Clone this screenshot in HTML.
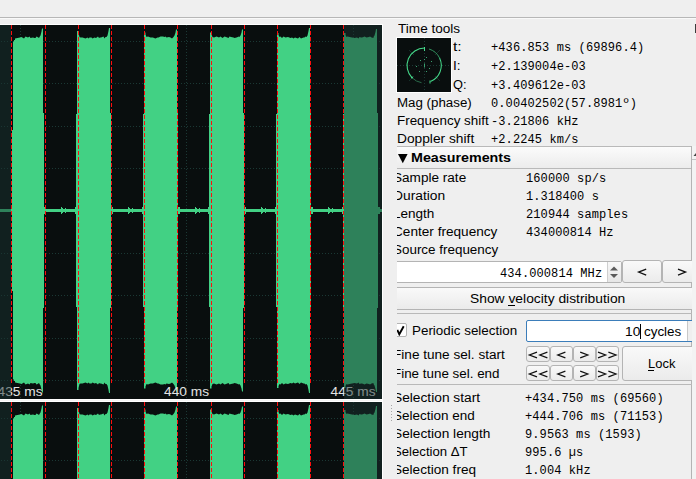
<!DOCTYPE html>
<html><head><meta charset="utf-8"><style>
*{margin:0;padding:0;box-sizing:border-box}
html,body{width:696px;height:479px;overflow:hidden;background:#efefef}
body{position:relative}
.t{position:absolute;white-space:pre;line-height:14px;transform-origin:0 0}
.s{font-family:"Liberation Sans",sans-serif}
.m{font-family:"Liberation Mono",monospace;letter-spacing:0.1px}
.abs{position:absolute}
.btn{position:absolute;border:1px solid #b4b4b4;border-radius:3px;background:linear-gradient(#f9f9f9,#ebebeb)}
</style></head>
<body>
<svg width="383" height="479" style="position:absolute;left:0;top:0">
<defs>
<clipPath id="c1"><rect x="0" y="25" width="382" height="374"/></clipPath>
<clipPath id="c2"><rect x="0" y="25" width="382" height="77"/></clipPath>
</defs>
<rect x="0" y="24" width="383" height="455" fill="#ffffff"/>
<rect x="0" y="400" width="382" height="1" fill="#f4f4f4"/>
<rect x="0" y="398" width="382" height="1" fill="#000"/>
<rect x="0" y="402" width="382" height="1" fill="#000"/>
<g transform="translate(0,0)" clip-path="url(#c1)">
<rect x="0" y="25" width="382" height="374" fill="#090e0e"/>
<g shape-rendering="crispEdges">
<path d="M1,41.5H382" stroke="#1b3834" stroke-dasharray="1 2"/>
<path d="M1,83.5H382" stroke="#1b3834" stroke-dasharray="1 2"/>
<path d="M1,126.5H382" stroke="#1b3834" stroke-dasharray="1 2"/>
<path d="M1,168.5H382" stroke="#1b3834" stroke-dasharray="1 2"/>
<path d="M1,210.5H382" stroke="#1b3834" stroke-dasharray="1 2"/>
<path d="M1,253.5H382" stroke="#1b3834" stroke-dasharray="1 2"/>
<path d="M1,295.5H382" stroke="#1b3834" stroke-dasharray="1 2"/>
<path d="M1,338.5H382" stroke="#1b3834" stroke-dasharray="1 2"/>
<path d="M1,380.5H382" stroke="#1b3834" stroke-dasharray="1 2"/>
<path d="M20.5,25V399" stroke="#1b3834" stroke-dasharray="1 2"/>
<path d="M186.5,25V399" stroke="#1b3834" stroke-dasharray="1 2"/>
<path d="M353.5,25V399" stroke="#1b3834" stroke-dasharray="1 2"/>
<rect x="0" y="209" width="382" height="3" fill="#42d184"/>
<rect x="12" y="204" width="1" height="13" fill="#42d184"/>
<rect x="11" y="207" width="1" height="7" fill="#42d184"/>
<rect x="43" y="203" width="1" height="16" fill="#42d184"/>
<rect x="44" y="207" width="2" height="7" fill="#42d184"/>
<path d="M61,207 L63,209 L63,212 L61,214Z M64,209 L66,207 L66,214 L64,212Z" fill="#42d184"/>
<rect x="76" y="204" width="1" height="13" fill="#42d184"/>
<rect x="75" y="207" width="1" height="7" fill="#42d184"/>
<rect x="110" y="203" width="1" height="16" fill="#42d184"/>
<rect x="111" y="207" width="2" height="7" fill="#42d184"/>
<path d="M128,207 L130,209 L130,212 L128,214Z M131,209 L133,207 L133,214 L131,212Z" fill="#42d184"/>
<rect x="143" y="204" width="1" height="13" fill="#42d184"/>
<rect x="142" y="207" width="1" height="7" fill="#42d184"/>
<rect x="177" y="203" width="1" height="16" fill="#42d184"/>
<rect x="178" y="207" width="2" height="7" fill="#42d184"/>
<path d="M195,207 L197,209 L197,212 L195,214Z M198,209 L200,207 L200,214 L198,212Z" fill="#42d184"/>
<rect x="209" y="204" width="1" height="13" fill="#42d184"/>
<rect x="208" y="207" width="1" height="7" fill="#42d184"/>
<rect x="243" y="203" width="1" height="16" fill="#42d184"/>
<rect x="244" y="207" width="2" height="7" fill="#42d184"/>
<path d="M261,207 L263,209 L263,212 L261,214Z M264,209 L266,207 L266,214 L264,212Z" fill="#42d184"/>
<rect x="276" y="204" width="1" height="13" fill="#42d184"/>
<rect x="275" y="207" width="1" height="7" fill="#42d184"/>
<rect x="310" y="203" width="1" height="16" fill="#42d184"/>
<rect x="311" y="207" width="2" height="7" fill="#42d184"/>
<path d="M328,207 L330,209 L330,212 L328,214Z M331,209 L333,207 L333,214 L331,212Z" fill="#42d184"/>
<rect x="343" y="204" width="1" height="13" fill="#42d184"/>
<rect x="342" y="207" width="1" height="7" fill="#42d184"/>
<rect x="377" y="203" width="1" height="16" fill="#42d184"/>
<rect x="378" y="207" width="2" height="7" fill="#42d184"/>
</g>
<path d="M13,41.5 L14,41.5 L14,40 L15,40 L15,38.5 L17.5,38 L20,37.5 L21.5,37 L24,38.5 L25.5,36.5 L28,37.5 L29.5,36.5 L30.5,38 L33,37.5 L34.5,38 L35.5,38 L36.5,36.5 L37.5,37 L39,38 L39.5,37 L40.5,35.5 L41.5,31.5 L42,28.5 L43,28.5 L43,392.5 L42,392.5 L41.5,389.5 L40.5,385.5 L39.5,384 L39,383 L37.5,384 L36.5,384.5 L35.5,383 L34.5,383 L33,383.5 L30.5,383 L29.5,384.5 L28,383.5 L25.5,384.5 L24,382.5 L21.5,384 L20,383.5 L17.5,383 L15,382.5 L15,381 L14,381 L14,379.5 L13,379.5Z" fill="#42d184"/>
<path d="M77,31 L78.5,31 L78.5,33 L79.5,37 L80.5,37.5 L82.5,37.5 L84,38 L85.5,38.5 L87.5,37.5 L88.5,38.5 L89.5,37.5 L91.5,37.5 L92.5,38.5 L94.5,37.5 L96,38 L98,36.5 L99,38 L100,37.5 L101,37.5 L103.5,36.5 L104.5,38.5 L105.5,37 L106.5,37 L107.5,35.5 L108.5,31 L109,28 L110,28 L110,393 L109,393 L108.5,390 L107.5,385.5 L106.5,384 L105.5,384 L104.5,382.5 L103.5,384.5 L101,383.5 L100,383.5 L99,383 L98,384.5 L96,383 L94.5,383.5 L92.5,382.5 L91.5,383.5 L89.5,383.5 L88.5,382.5 L87.5,383.5 L85.5,382.5 L84,383 L82.5,383.5 L80.5,383.5 L79.5,384 L78.5,388 L78.5,390 L77,390Z" fill="#42d184"/>
<path d="M144,32.5 L145.5,32.5 L145.5,34.5 L146.5,37 L148,36.5 L150.5,37.5 L153,37.5 L154,38 L155.5,38.5 L157.5,37.5 L158.5,37.5 L160.5,36.5 L163,36.5 L164.5,37 L165.5,36.5 L166.5,37.5 L169,37 L170.5,37.5 L172,38.5 L173.5,37 L174.5,35.5 L175.5,32.5 L176,29.5 L177,29.5 L177,391.5 L176,391.5 L175.5,388.5 L174.5,385.5 L173.5,384 L172,382.5 L170.5,383.5 L169,384 L166.5,383.5 L165.5,384.5 L164.5,384 L163,384.5 L160.5,384.5 L158.5,383.5 L157.5,383.5 L155.5,382.5 L154,383 L153,383.5 L150.5,383.5 L148,384.5 L146.5,384 L145.5,386.5 L145.5,388.5 L144,388.5Z" fill="#42d184"/>
<path d="M210,32.5 L211.5,32.5 L211.5,34.5 L212.5,37 L214,37.5 L216.5,36.5 L219,37.5 L220.5,36.5 L222.5,38 L224.5,36.5 L226,37 L228.5,38 L229.5,36.5 L231,37 L233.5,37.5 L234.5,38 L236.5,37.5 L239,36.5 L239.5,37 L240.5,35.5 L241.5,32.5 L242,29.5 L243,29.5 L243,391.5 L242,391.5 L241.5,388.5 L240.5,385.5 L239.5,384 L239,384.5 L236.5,383.5 L234.5,383 L233.5,383.5 L231,384 L229.5,384.5 L228.5,383 L226,384 L224.5,384.5 L222.5,383 L220.5,384.5 L219,383.5 L216.5,384.5 L214,383.5 L212.5,384 L211.5,386.5 L211.5,388.5 L210,388.5Z" fill="#42d184"/>
<path d="M277,33 L278.5,33 L278.5,35 L279.5,37 L280.5,36.5 L282,38 L283.5,36.5 L285.5,37.5 L288,37 L290.5,38 L292,37.5 L293.5,38.5 L295,37.5 L296.5,38 L298,38.5 L299.5,37 L301,38.5 L303.5,37.5 L304.5,37.5 L305.5,36.5 L306.5,37 L307.5,35.5 L308.5,31 L309,28 L310,28 L310,393 L309,393 L308.5,390 L307.5,385.5 L306.5,384 L305.5,384.5 L304.5,383.5 L303.5,383.5 L301,382.5 L299.5,384 L298,382.5 L296.5,383 L295,383.5 L293.5,382.5 L292,383.5 L290.5,383 L288,384 L285.5,383.5 L283.5,384.5 L282,383 L280.5,384.5 L279.5,384 L278.5,386 L278.5,388 L277,388Z" fill="#42d184"/>
<path d="M344,33 L345.5,33 L345.5,35 L346.5,37 L347.5,36.5 L349.5,37 L352,37.5 L354.5,38 L357,37.5 L358.5,38.5 L359.5,37 L361,37.5 L362,37.5 L363.5,37 L364.5,36.5 L366.5,37.5 L369,37 L370,36.5 L371.5,37.5 L373.5,38 L373.5,37 L374.5,35.5 L375.5,32 L376,29 L377,29 L377,392 L376,392 L375.5,389 L374.5,385.5 L373.5,384 L373.5,383 L371.5,383.5 L370,384.5 L369,384 L366.5,383.5 L364.5,384.5 L363.5,384 L362,383.5 L361,383.5 L359.5,384 L358.5,382.5 L357,383.5 L354.5,383 L352,383.5 L349.5,384 L347.5,384.5 L346.5,384 L345.5,386 L345.5,388 L344,388Z" fill="#42d184"/>
<rect x="12" y="130" width="1" height="161" fill="#42d184" shape-rendering="crispEdges"/>
<rect x="43" y="113" width="1" height="195" fill="#42d184" shape-rendering="crispEdges"/>
<rect x="76" y="114" width="1" height="193" fill="#42d184" shape-rendering="crispEdges"/>
<rect x="110" y="113" width="1" height="195" fill="#42d184" shape-rendering="crispEdges"/>
<rect x="143" y="114" width="1" height="193" fill="#42d184" shape-rendering="crispEdges"/>
<rect x="177" y="113" width="1" height="195" fill="#42d184" shape-rendering="crispEdges"/>
<rect x="209" y="114" width="1" height="193" fill="#42d184" shape-rendering="crispEdges"/>
<rect x="243" y="113" width="1" height="195" fill="#42d184" shape-rendering="crispEdges"/>
<rect x="276" y="114" width="1" height="193" fill="#42d184" shape-rendering="crispEdges"/>
<rect x="310" y="113" width="1" height="195" fill="#42d184" shape-rendering="crispEdges"/>
<rect x="343" y="114" width="1" height="193" fill="#42d184" shape-rendering="crispEdges"/>
<rect x="377" y="113" width="1" height="195" fill="#42d184" shape-rendering="crispEdges"/>
<g shape-rendering="crispEdges">
<path d="M11.5,25V383" stroke="#ff0d0d" stroke-dasharray="4 2"/>
<path d="M45.5,25V383" stroke="#ff0d0d" stroke-dasharray="4 2"/>
<path d="M78.5,25V383" stroke="#ff0d0d" stroke-dasharray="4 2"/>
<path d="M111.5,25V383" stroke="#ff0d0d" stroke-dasharray="4 2"/>
<path d="M144.5,25V383" stroke="#ff0d0d" stroke-dasharray="4 2"/>
<path d="M177.5,25V383" stroke="#ff0d0d" stroke-dasharray="4 2"/>
<path d="M211.5,25V383" stroke="#ff0d0d" stroke-dasharray="4 2"/>
<path d="M244.5,25V383" stroke="#ff0d0d" stroke-dasharray="4 2"/>
<path d="M277.5,25V383" stroke="#ff0d0d" stroke-dasharray="4 2"/>
<path d="M310.5,25V383" stroke="#ff0d0d" stroke-dasharray="4 2"/>
<path d="M343.5,25V383" stroke="#ff0d0d" stroke-dasharray="4 2"/>
</g>
<text x="20" y="396" fill="#e4e4e4" font-family="Liberation Sans" font-size="12.5" text-anchor="middle" textLength="45" lengthAdjust="spacingAndGlyphs">435 ms</text>
<text x="186.5" y="396" fill="#e4e4e4" font-family="Liberation Sans" font-size="12.5" text-anchor="middle" textLength="45" lengthAdjust="spacingAndGlyphs">440 ms</text>
<text x="353" y="396" fill="#e4e4e4" font-family="Liberation Sans" font-size="12.5" text-anchor="middle" textLength="45" lengthAdjust="spacingAndGlyphs">445 ms</text>
<rect x="0" y="25" width="11" height="374" fill="rgba(26,50,48,0.5)"/>
<rect x="344" y="25" width="38" height="374" fill="rgba(26,50,48,0.5)"/>
</g>
<g transform="translate(0,377)" clip-path="url(#c2)">
<rect x="0" y="25" width="382" height="374" fill="#090e0e"/>
<g shape-rendering="crispEdges">
<path d="M1,41.5H382" stroke="#1b3834" stroke-dasharray="1 2"/>
<path d="M1,83.5H382" stroke="#1b3834" stroke-dasharray="1 2"/>
<path d="M1,126.5H382" stroke="#1b3834" stroke-dasharray="1 2"/>
<path d="M1,168.5H382" stroke="#1b3834" stroke-dasharray="1 2"/>
<path d="M1,210.5H382" stroke="#1b3834" stroke-dasharray="1 2"/>
<path d="M1,253.5H382" stroke="#1b3834" stroke-dasharray="1 2"/>
<path d="M1,295.5H382" stroke="#1b3834" stroke-dasharray="1 2"/>
<path d="M1,338.5H382" stroke="#1b3834" stroke-dasharray="1 2"/>
<path d="M1,380.5H382" stroke="#1b3834" stroke-dasharray="1 2"/>
<path d="M20.5,25V399" stroke="#1b3834" stroke-dasharray="1 2"/>
<path d="M186.5,25V399" stroke="#1b3834" stroke-dasharray="1 2"/>
<path d="M353.5,25V399" stroke="#1b3834" stroke-dasharray="1 2"/>
<rect x="0" y="209" width="382" height="3" fill="#42d184"/>
<rect x="12" y="204" width="1" height="13" fill="#42d184"/>
<rect x="11" y="207" width="1" height="7" fill="#42d184"/>
<rect x="43" y="203" width="1" height="16" fill="#42d184"/>
<rect x="44" y="207" width="2" height="7" fill="#42d184"/>
<path d="M61,207 L63,209 L63,212 L61,214Z M64,209 L66,207 L66,214 L64,212Z" fill="#42d184"/>
<rect x="76" y="204" width="1" height="13" fill="#42d184"/>
<rect x="75" y="207" width="1" height="7" fill="#42d184"/>
<rect x="110" y="203" width="1" height="16" fill="#42d184"/>
<rect x="111" y="207" width="2" height="7" fill="#42d184"/>
<path d="M128,207 L130,209 L130,212 L128,214Z M131,209 L133,207 L133,214 L131,212Z" fill="#42d184"/>
<rect x="143" y="204" width="1" height="13" fill="#42d184"/>
<rect x="142" y="207" width="1" height="7" fill="#42d184"/>
<rect x="177" y="203" width="1" height="16" fill="#42d184"/>
<rect x="178" y="207" width="2" height="7" fill="#42d184"/>
<path d="M195,207 L197,209 L197,212 L195,214Z M198,209 L200,207 L200,214 L198,212Z" fill="#42d184"/>
<rect x="209" y="204" width="1" height="13" fill="#42d184"/>
<rect x="208" y="207" width="1" height="7" fill="#42d184"/>
<rect x="243" y="203" width="1" height="16" fill="#42d184"/>
<rect x="244" y="207" width="2" height="7" fill="#42d184"/>
<path d="M261,207 L263,209 L263,212 L261,214Z M264,209 L266,207 L266,214 L264,212Z" fill="#42d184"/>
<rect x="276" y="204" width="1" height="13" fill="#42d184"/>
<rect x="275" y="207" width="1" height="7" fill="#42d184"/>
<rect x="310" y="203" width="1" height="16" fill="#42d184"/>
<rect x="311" y="207" width="2" height="7" fill="#42d184"/>
<path d="M328,207 L330,209 L330,212 L328,214Z M331,209 L333,207 L333,214 L331,212Z" fill="#42d184"/>
<rect x="343" y="204" width="1" height="13" fill="#42d184"/>
<rect x="342" y="207" width="1" height="7" fill="#42d184"/>
<rect x="377" y="203" width="1" height="16" fill="#42d184"/>
<rect x="378" y="207" width="2" height="7" fill="#42d184"/>
</g>
<path d="M13,41.5 L14,41.5 L14,40 L15,40 L15,38.5 L17.5,38 L20,37.5 L21.5,37 L24,38.5 L25.5,36.5 L28,37.5 L29.5,36.5 L30.5,38 L33,37.5 L34.5,38 L35.5,38 L36.5,36.5 L37.5,37 L39,38 L39.5,37 L40.5,35.5 L41.5,31.5 L42,28.5 L43,28.5 L43,392.5 L42,392.5 L41.5,389.5 L40.5,385.5 L39.5,384 L39,383 L37.5,384 L36.5,384.5 L35.5,383 L34.5,383 L33,383.5 L30.5,383 L29.5,384.5 L28,383.5 L25.5,384.5 L24,382.5 L21.5,384 L20,383.5 L17.5,383 L15,382.5 L15,381 L14,381 L14,379.5 L13,379.5Z" fill="#42d184"/>
<path d="M77,31 L78.5,31 L78.5,33 L79.5,37 L80.5,37.5 L82.5,37.5 L84,38 L85.5,38.5 L87.5,37.5 L88.5,38.5 L89.5,37.5 L91.5,37.5 L92.5,38.5 L94.5,37.5 L96,38 L98,36.5 L99,38 L100,37.5 L101,37.5 L103.5,36.5 L104.5,38.5 L105.5,37 L106.5,37 L107.5,35.5 L108.5,31 L109,28 L110,28 L110,393 L109,393 L108.5,390 L107.5,385.5 L106.5,384 L105.5,384 L104.5,382.5 L103.5,384.5 L101,383.5 L100,383.5 L99,383 L98,384.5 L96,383 L94.5,383.5 L92.5,382.5 L91.5,383.5 L89.5,383.5 L88.5,382.5 L87.5,383.5 L85.5,382.5 L84,383 L82.5,383.5 L80.5,383.5 L79.5,384 L78.5,388 L78.5,390 L77,390Z" fill="#42d184"/>
<path d="M144,32.5 L145.5,32.5 L145.5,34.5 L146.5,37 L148,36.5 L150.5,37.5 L153,37.5 L154,38 L155.5,38.5 L157.5,37.5 L158.5,37.5 L160.5,36.5 L163,36.5 L164.5,37 L165.5,36.5 L166.5,37.5 L169,37 L170.5,37.5 L172,38.5 L173.5,37 L174.5,35.5 L175.5,32.5 L176,29.5 L177,29.5 L177,391.5 L176,391.5 L175.5,388.5 L174.5,385.5 L173.5,384 L172,382.5 L170.5,383.5 L169,384 L166.5,383.5 L165.5,384.5 L164.5,384 L163,384.5 L160.5,384.5 L158.5,383.5 L157.5,383.5 L155.5,382.5 L154,383 L153,383.5 L150.5,383.5 L148,384.5 L146.5,384 L145.5,386.5 L145.5,388.5 L144,388.5Z" fill="#42d184"/>
<path d="M210,32.5 L211.5,32.5 L211.5,34.5 L212.5,37 L214,37.5 L216.5,36.5 L219,37.5 L220.5,36.5 L222.5,38 L224.5,36.5 L226,37 L228.5,38 L229.5,36.5 L231,37 L233.5,37.5 L234.5,38 L236.5,37.5 L239,36.5 L239.5,37 L240.5,35.5 L241.5,32.5 L242,29.5 L243,29.5 L243,391.5 L242,391.5 L241.5,388.5 L240.5,385.5 L239.5,384 L239,384.5 L236.5,383.5 L234.5,383 L233.5,383.5 L231,384 L229.5,384.5 L228.5,383 L226,384 L224.5,384.5 L222.5,383 L220.5,384.5 L219,383.5 L216.5,384.5 L214,383.5 L212.5,384 L211.5,386.5 L211.5,388.5 L210,388.5Z" fill="#42d184"/>
<path d="M277,33 L278.5,33 L278.5,35 L279.5,37 L280.5,36.5 L282,38 L283.5,36.5 L285.5,37.5 L288,37 L290.5,38 L292,37.5 L293.5,38.5 L295,37.5 L296.5,38 L298,38.5 L299.5,37 L301,38.5 L303.5,37.5 L304.5,37.5 L305.5,36.5 L306.5,37 L307.5,35.5 L308.5,31 L309,28 L310,28 L310,393 L309,393 L308.5,390 L307.5,385.5 L306.5,384 L305.5,384.5 L304.5,383.5 L303.5,383.5 L301,382.5 L299.5,384 L298,382.5 L296.5,383 L295,383.5 L293.5,382.5 L292,383.5 L290.5,383 L288,384 L285.5,383.5 L283.5,384.5 L282,383 L280.5,384.5 L279.5,384 L278.5,386 L278.5,388 L277,388Z" fill="#42d184"/>
<path d="M344,33 L345.5,33 L345.5,35 L346.5,37 L347.5,36.5 L349.5,37 L352,37.5 L354.5,38 L357,37.5 L358.5,38.5 L359.5,37 L361,37.5 L362,37.5 L363.5,37 L364.5,36.5 L366.5,37.5 L369,37 L370,36.5 L371.5,37.5 L373.5,38 L373.5,37 L374.5,35.5 L375.5,32 L376,29 L377,29 L377,392 L376,392 L375.5,389 L374.5,385.5 L373.5,384 L373.5,383 L371.5,383.5 L370,384.5 L369,384 L366.5,383.5 L364.5,384.5 L363.5,384 L362,383.5 L361,383.5 L359.5,384 L358.5,382.5 L357,383.5 L354.5,383 L352,383.5 L349.5,384 L347.5,384.5 L346.5,384 L345.5,386 L345.5,388 L344,388Z" fill="#42d184"/>
<rect x="12" y="130" width="1" height="161" fill="#42d184" shape-rendering="crispEdges"/>
<rect x="43" y="113" width="1" height="195" fill="#42d184" shape-rendering="crispEdges"/>
<rect x="76" y="114" width="1" height="193" fill="#42d184" shape-rendering="crispEdges"/>
<rect x="110" y="113" width="1" height="195" fill="#42d184" shape-rendering="crispEdges"/>
<rect x="143" y="114" width="1" height="193" fill="#42d184" shape-rendering="crispEdges"/>
<rect x="177" y="113" width="1" height="195" fill="#42d184" shape-rendering="crispEdges"/>
<rect x="209" y="114" width="1" height="193" fill="#42d184" shape-rendering="crispEdges"/>
<rect x="243" y="113" width="1" height="195" fill="#42d184" shape-rendering="crispEdges"/>
<rect x="276" y="114" width="1" height="193" fill="#42d184" shape-rendering="crispEdges"/>
<rect x="310" y="113" width="1" height="195" fill="#42d184" shape-rendering="crispEdges"/>
<rect x="343" y="114" width="1" height="193" fill="#42d184" shape-rendering="crispEdges"/>
<rect x="377" y="113" width="1" height="195" fill="#42d184" shape-rendering="crispEdges"/>
<g shape-rendering="crispEdges">
<path d="M11.5,25V383" stroke="#ff0d0d" stroke-dasharray="4 2"/>
<path d="M45.5,25V383" stroke="#ff0d0d" stroke-dasharray="4 2"/>
<path d="M78.5,25V383" stroke="#ff0d0d" stroke-dasharray="4 2"/>
<path d="M111.5,25V383" stroke="#ff0d0d" stroke-dasharray="4 2"/>
<path d="M144.5,25V383" stroke="#ff0d0d" stroke-dasharray="4 2"/>
<path d="M177.5,25V383" stroke="#ff0d0d" stroke-dasharray="4 2"/>
<path d="M211.5,25V383" stroke="#ff0d0d" stroke-dasharray="4 2"/>
<path d="M244.5,25V383" stroke="#ff0d0d" stroke-dasharray="4 2"/>
<path d="M277.5,25V383" stroke="#ff0d0d" stroke-dasharray="4 2"/>
<path d="M310.5,25V383" stroke="#ff0d0d" stroke-dasharray="4 2"/>
<path d="M343.5,25V383" stroke="#ff0d0d" stroke-dasharray="4 2"/>
</g>
<rect x="0" y="25" width="11" height="374" fill="rgba(26,50,48,0.5)"/>
<rect x="344" y="25" width="38" height="374" fill="rgba(26,50,48,0.5)"/>
</g>
</svg>

<div class="abs" style="left:0;top:17px;width:696px;height:1px;background:#b7b7b7"></div>
<div class="abs" style="left:0;top:18px;width:696px;height:1px;background:#f9f9f9"></div>
<div class="abs" style="left:695px;top:24px;width:2px;height:9px;background:#3c3c3c"></div>
<div class="abs" style="left:692px;top:146px;width:4px;height:333px;background:#f3f3f3"></div>
<div class="abs" style="left:692px;top:159px;width:4px;height:1px;background:#c4c4c4"></div>
<svg class="abs" style="left:692px;top:150px" width="4" height="8"><path d="M1.5,6 L4.5,2.5 L7.5,6Z" fill="#444"/></svg>
<svg class="abs" style="left:390px;top:404px" width="3" height="18"><g fill="#a5a5a5"><rect x="1" y="1" width="1" height="1"/><rect x="1" y="4" width="1" height="1"/><rect x="1" y="7" width="1" height="1"/><rect x="1" y="10" width="1" height="1"/><rect x="1" y="13" width="1" height="1"/><rect x="1" y="16" width="1" height="1"/></g></svg>
<svg class="abs" style="left:396px;top:37px" width="56" height="56">
<rect width="56" height="56" fill="#fff"/>
<rect x="1" y="1" width="54" height="54" fill="#090e0e"/>
<g transform="translate(1,1)">
<g shape-rendering="crispEdges">
<path d="M0,27.5H54" stroke="#1b3834" stroke-dasharray="1 2"/>
<path d="M27.5,0V54" stroke="#1b3834" stroke-dasharray="1 2"/>
</g>
<path d="M12,12l5,5M43,12l-5,5M12,43l5,-5M43,43l-5,-5" stroke="#16302a" stroke-width="1"/>
<path d="M27.5,10 A17.5,17.5 0 0,0 15.1,39.8" fill="none" stroke="#45d98a" stroke-width="1.05"/>
<path d="M15.1,39.8 A17.5,17.5 0 0,0 24.5,44.7" fill="none" stroke="#2a6a4a" stroke-width="1"/>
<path d="M32,11 A17.5,17.5 0 0,1 42.6,20" fill="none" stroke="#32935f" stroke-width="1"/>
<path d="M42.6,20 A17.5,17.5 0 0,1 33.5,43.6" fill="none" stroke="#45d98a" stroke-width="1.05"/>
<path d="M27.5,9V13M33,42.5V45.5" stroke="#45d98a" stroke-width="1"/>
<circle cx="15" cy="39.5" r="1" fill="#45d98a"/>
<g fill="#3aa070">
<rect x="27" y="25.5" width="1" height="4"/>
<rect x="27" y="21" width="1" height="1"/><rect x="23" y="22" width="1" height="1"/><rect x="34" y="23" width="1" height="1"/>
<rect x="19" y="28" width="1" height="1"/><rect x="32" y="30" width="1" height="1"/><rect x="22" y="33" width="1" height="1"/>
<rect x="29" y="33" width="1" height="1"/><rect x="29" y="19" width="1" height="1"/>
</g>
</g>
</svg>

<div class="abs" style="left:397px;top:0;width:295px;height:479px;overflow:hidden">
<div class="abs" style="left:-397px;top:0;width:696px;height:479px">

<div class="abs" style="left:390px;top:146px;width:302px;height:23px;border:1px solid #b9b9b9;background:linear-gradient(#fbfbfb,#ececec)"></div>
<svg class="abs" style="left:398px;top:154px" width="10" height="10"><path d="M0,0 H9.6 L4.8,9.2 Z" fill="#000"/></svg>
<div class="abs" style="left:691px;top:146px;width:1px;height:333px;background:#b4b4b4"></div>
<!-- spinbox -->
<div class="abs" style="left:390px;top:261px;width:232px;height:22px;border:1px solid #b4b4b4;border-radius:2px;background:#fff"></div>
<div class="abs" style="left:607px;top:262px;width:14px;height:20px;border-left:1px solid #cfcfcf;background:linear-gradient(#f8f8f8,#e6e6e6)"></div>
<svg class="abs" style="left:609px;top:266px" width="10" height="13"><path d="M1,4.5 L5,0.5 L9,4.5 Z M1,8 L9,8 L5,12 Z" fill="#5a5a5a"/></svg>
<div class="btn" style="left:622px;top:260px;width:40px;height:23px"></div>
<div class="btn" style="left:662px;top:260px;width:40px;height:23px"></div>
<div class="btn" style="left:380px;top:287px;width:320px;height:23px"></div>
<div class="abs" style="left:508px;top:305px;width:7px;height:1px;background:#000"></div>
<div class="abs" style="left:390px;top:313px;width:302px;height:1px;background:#b9b9b9"></div>
<!-- checkbox -->
<div class="abs" style="left:393px;top:323px;width:14px;height:14px;border:1px solid #b4b4b4;border-radius:2px;background:#fff"></div>
<svg class="abs" style="left:396px;top:325px" width="10" height="11"><path d="M1.3,4.8 L3.3,9.3 L7.7,1.3" fill="none" stroke="#000" stroke-width="1.9"/></svg>
<!-- periodic lineedit -->
<div class="abs" style="left:526px;top:320px;width:170px;height:22px;border:1px solid #3b7dba;border-radius:2px;background:#fff"></div>
<div class="abs" style="left:687px;top:321px;width:6px;height:20px;border-left:1px solid #c8c8c8;background:#efefef"></div>
<div class="abs" style="left:640px;top:324px;width:1px;height:15px;background:#000"></div>
<!-- small buttons -->
<div class="btn" style="left:526px;top:346px;width:24px;height:16px"></div>
<div class="btn" style="left:550px;top:346px;width:23px;height:16px"></div>
<div class="btn" style="left:573px;top:346px;width:23px;height:16px"></div>
<div class="btn" style="left:596px;top:346px;width:23px;height:16px"></div>
<div class="btn" style="left:526px;top:365px;width:24px;height:16px"></div>
<div class="btn" style="left:550px;top:365px;width:23px;height:16px"></div>
<div class="btn" style="left:573px;top:365px;width:23px;height:16px"></div>
<div class="btn" style="left:596px;top:365px;width:23px;height:16px"></div>
<div class="btn" style="left:622px;top:346px;width:80px;height:35px"></div>
<div class="abs" style="left:648px;top:370px;width:6px;height:1px;background:#000"></div>
<div class="abs" style="left:390px;top:384px;width:302px;height:1px;background:#b9b9b9"></div>

<div class="t s" style="left:398px;top:22px;font-size:12.5px;color:#000;transform:scaleX(1.0869)">Time tools</div>
<div class="t s" style="left:453px;top:40px;font-size:12.5px;color:#000;transform:scaleX(1.2596)">t:</div>
<div class="t s" style="left:453px;top:59px;font-size:12.5px;color:#000;transform:scaleX(1.0917)">I:</div>
<div class="t s" style="left:453px;top:78px;font-size:12.5px;color:#000;transform:scaleX(1.0222)">Q:</div>
<div class="t m" style="left:491px;top:41px;font-size:12px;color:#000">+436.853 ms (69896.4)</div>
<div class="t m" style="left:491px;top:60px;font-size:12px;color:#000">+2.139004e-03</div>
<div class="t m" style="left:491px;top:79px;font-size:12px;color:#000">+3.409612e-03</div>
<div class="t s" style="left:397px;top:96px;font-size:12.5px;color:#000;transform:scaleX(1.0648)">Mag (phase)</div>
<div class="t m" style="left:491px;top:97px;font-size:12px;color:#000">0.00402502(57.8981º)</div>
<div class="t s" style="left:397px;top:114px;font-size:12.5px;color:#000;transform:scaleX(1.0733)">Frequency shift</div>
<div class="t m" style="left:491px;top:115px;font-size:12px;color:#000">-3.21806 kHz</div>
<div class="t s" style="left:397px;top:132px;font-size:12.5px;color:#000;transform:scaleX(1.1001)">Doppler shift</div>
<div class="t m" style="left:491px;top:133px;font-size:12px;color:#000">+2.2245 km/s</div>
<div class="t s" style="left:411px;top:151px;font-size:12.5px;font-weight:bold;color:#000;transform:scaleX(1.1423)">Measurements</div>
<div class="t s" style="left:393px;top:171px;font-size:12.5px;color:#000;transform:scaleX(1.0860)">Sample rate</div>
<div class="t m" style="left:526px;top:172px;font-size:12px;color:#000">160000 sp/s</div>
<div class="t s" style="left:393px;top:189px;font-size:12.5px;color:#000;transform:scaleX(1.1032)">Duration</div>
<div class="t m" style="left:526px;top:190px;font-size:12px;color:#000">1.318400 s</div>
<div class="t s" style="left:393px;top:207px;font-size:12.5px;color:#000;transform:scaleX(1.0827)">Length</div>
<div class="t m" style="left:526px;top:208px;font-size:12px;color:#000">210944 samples</div>
<div class="t s" style="left:393px;top:225px;font-size:12.5px;color:#000;transform:scaleX(1.0888)">Center frequency</div>
<div class="t m" style="left:526px;top:226px;font-size:12px;color:#000">434000814 Hz</div>
<div class="t s" style="left:393px;top:243px;font-size:12.5px;color:#000;transform:scaleX(1.0740)">Source frequency</div>
<div class="t s" style="left:393px;top:391px;font-size:12.5px;color:#000;transform:scaleX(1.0993)">Selection start</div>
<div class="t m" style="left:525px;top:392px;font-size:12px;color:#000">+434.750 ms (69560)</div>
<div class="t s" style="left:393px;top:409px;font-size:12.5px;color:#000;transform:scaleX(1.0789)">Selection end</div>
<div class="t m" style="left:525px;top:410px;font-size:12px;color:#000">+444.706 ms (71153)</div>
<div class="t s" style="left:393px;top:427px;font-size:12.5px;color:#000;transform:scaleX(1.0946)">Selection length</div>
<div class="t m" style="left:525px;top:428px;font-size:12px;color:#000">9.9563 ms (1593)</div>
<div class="t s" style="left:393px;top:445px;font-size:12.5px;color:#000;transform:scaleX(1.0533)">Selection ΔT</div>
<div class="t m" style="left:525px;top:446px;font-size:12px;color:#000">995.6 µs</div>
<div class="t s" style="left:393px;top:463px;font-size:12.5px;color:#000;transform:scaleX(1.0861)">Selection freq</div>
<div class="t m" style="left:525px;top:464px;font-size:12px;color:#000">1.004 kHz</div>
<div class="t s" style="left:412px;top:324px;font-size:12.5px;color:#000;transform:scaleX(1.0729)">Periodic selection</div>
<div class="t s" style="left:393px;top:348px;font-size:12.5px;color:#000;transform:scaleX(1.0876)">Fine tune sel. start</div>
<div class="t s" style="left:393px;top:367px;font-size:12.5px;color:#000;transform:scaleX(1.0716)">Fine tune sel. end</div>
<div class="t m" style="left:500px;top:267px;font-size:12px;color:#000">434.000814 MHz</div>
<div class="t s" style="left:470px;top:292px;font-size:12.5px;color:#000;transform:scaleX(1.1066)">Show velocity distribution</div>
<div class="t s" style="left:648px;top:357px;font-size:12.5px;color:#000;transform:scaleX(1.0364)">Lock</div>
<div class="t s" style="left:625px;top:325px;font-size:12.5px;color:#000;transform:scaleX(1.0983)">10</div>
<div class="t s" style="left:644px;top:325px;font-size:12.5px;color:#000;transform:scaleX(1.0731)">cycles</div>
<svg class="abs" style="left:0;top:0" width="696" height="479"><path d="M646.2,269.1 L638.6,272.1 L646.2,275.09999999999997" fill="none" stroke="#111" stroke-width="1.25" stroke-linejoin="miter"/><path d="M678,269.1 L685.6,272.1 L678,275.09999999999997" fill="none" stroke="#111" stroke-width="1.25" stroke-linejoin="miter"/><path d="M537.0,352.1 L529.4,355.0 L537.0,357.9" fill="none" stroke="#111" stroke-width="1.25" stroke-linejoin="miter"/><path d="M547.4000000000001,352.1 L539.8000000000001,355.0 L547.4000000000001,357.9" fill="none" stroke="#111" stroke-width="1.25" stroke-linejoin="miter"/><path d="M565.4000000000001,352.1 L557.8000000000001,355.0 L565.4000000000001,357.9" fill="none" stroke="#111" stroke-width="1.25" stroke-linejoin="miter"/><path d="M580.2,352.1 L587.8000000000001,355.0 L580.2,357.9" fill="none" stroke="#111" stroke-width="1.25" stroke-linejoin="miter"/><path d="M598,352.1 L605.6,355.0 L598,357.9" fill="none" stroke="#111" stroke-width="1.25" stroke-linejoin="miter"/><path d="M608.4,352.1 L616.0,355.0 L608.4,357.9" fill="none" stroke="#111" stroke-width="1.25" stroke-linejoin="miter"/><path d="M537.0,371.1 L529.4,374.0 L537.0,376.9" fill="none" stroke="#111" stroke-width="1.25" stroke-linejoin="miter"/><path d="M547.4000000000001,371.1 L539.8000000000001,374.0 L547.4000000000001,376.9" fill="none" stroke="#111" stroke-width="1.25" stroke-linejoin="miter"/><path d="M565.4000000000001,371.1 L557.8000000000001,374.0 L565.4000000000001,376.9" fill="none" stroke="#111" stroke-width="1.25" stroke-linejoin="miter"/><path d="M580.2,371.1 L587.8000000000001,374.0 L580.2,376.9" fill="none" stroke="#111" stroke-width="1.25" stroke-linejoin="miter"/><path d="M598,371.1 L605.6,374.0 L598,376.9" fill="none" stroke="#111" stroke-width="1.25" stroke-linejoin="miter"/><path d="M608.4,371.1 L616.0,374.0 L608.4,376.9" fill="none" stroke="#111" stroke-width="1.25" stroke-linejoin="miter"/></svg>
</div></div>
</body></html>
